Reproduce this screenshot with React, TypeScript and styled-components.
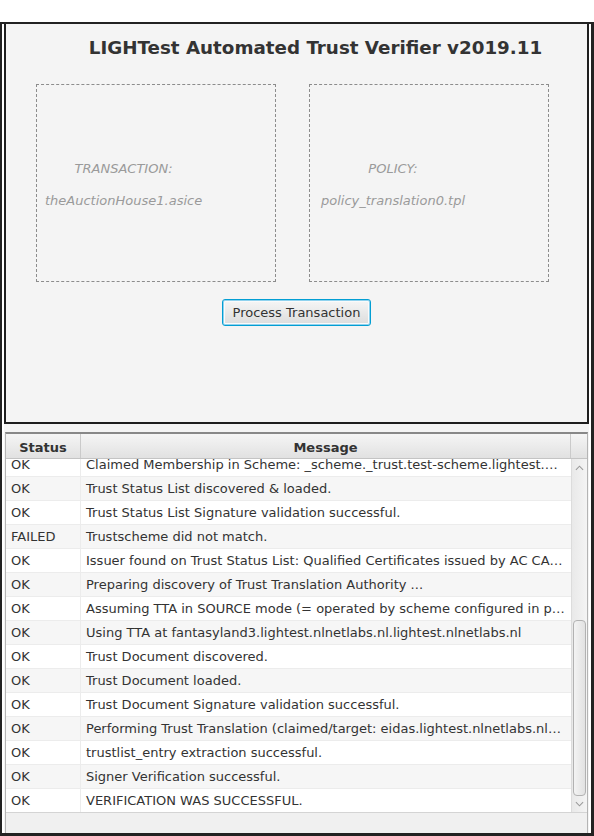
import * as React from "react";
import styled, { createGlobalStyle } from "styled-components";

interface LogEntry {
  status: string;
  message: string;
}

const LOG: LogEntry[] = [
  { status: "OK", message: "Claimed Membership in Scheme: _scheme._trust.test-scheme.lightest.nlnetlabs.nl" },
  { status: "OK", message: "Trust Status List discovered & loaded." },
  { status: "OK", message: "Trust Status List Signature validation successful." },
  { status: "FAILED", message: "Trustscheme did not match." },
  { status: "OK", message: "Issuer found on Trust Status List: Qualified Certificates issued by AC CAMERFIRMA" },
  { status: "OK", message: "Preparing discovery of Trust Translation Authority ..." },
  { status: "OK", message: "Assuming TTA in SOURCE mode (= operated by scheme configured in policy)" },
  { status: "OK", message: "Using TTA at fantasyland3.lightest.nlnetlabs.nl.lightest.nlnetlabs.nl" },
  { status: "OK", message: "Trust Document discovered." },
  { status: "OK", message: "Trust Document loaded." },
  { status: "OK", message: "Trust Document Signature validation successful." },
  { status: "OK", message: "Performing Trust Translation (claimed/target: eidas.lightest.nlnetlabs.nl/fantasyland3)" },
  { status: "OK", message: "trustlist_entry extraction successful." },
  { status: "OK", message: "Signer Verification successful." },
  { status: "OK", message: "VERIFICATION WAS SUCCESSFUL." }
];

const GlobalStyle = createGlobalStyle`
  html, body {
    margin: 0;
    padding: 0;
    background: #ffffff;
  }
  body {
    font-family: "DejaVu Sans", "Liberation Sans", sans-serif;
    font-size: 13px;
    color: #333;
  }
  * {
    box-sizing: border-box;
  }
`;

const App: React.FC = () => (
  <>
    <GlobalStyle />
    <Frame>
      <TopPanel>
        <Title>LIGHTest Automated Trust Verifier v2019.11</Title>
        <DropRow>
          <DropBox>
            <DropLabels offset={8}>
              <DropCaption>TRANSACTION:</DropCaption>
              <DropFile>theAuctionHouse1.asice</DropFile>
            </DropLabels>
          </DropBox>
          <DropBox>
            <DropLabels offset={11}>
              <DropCaption>POLICY:</DropCaption>
              <DropFile>policy_translation0.tpl</DropFile>
            </DropLabels>
          </DropBox>
        </DropRow>
        <ButtonRow>
          <ProcessButton>Process Transaction</ProcessButton>
        </ButtonRow>
      </TopPanel>
      <LowerPanel>
        <Table>
          <HeaderRow>
            <HeaderCell width={75}>Status</HeaderCell>
            <HeaderCell>Message</HeaderCell>
            <HeaderCorner />
          </HeaderRow>
          <BodyArea>
            <Rows>
              {LOG.map((entry, i) => (
                <Row key={i} odd={i % 2 === 1}>
                  <StatusCell>{entry.status}</StatusCell>
                  <MessageCell>{entry.message}</MessageCell>
                </Row>
              ))}
            </Rows>
            <ScrollBar>
              <Arrow viewBox="0 0 10 6">
                <path d="M1 5 L5 1 L9 5" />
              </Arrow>
              <Track>
                <Thumb />
              </Track>
              <Arrow viewBox="0 0 10 6">
                <path d="M1 1 L5 5 L9 1" />
              </Arrow>
            </ScrollBar>
          </BodyArea>
          <Footer />
        </Table>
      </LowerPanel>
    </Frame>
  </>
);

const Frame = styled.div`
  margin-top: 22px;
  width: 594px;
  height: 814px;
  border-top: 2px solid #222;
  border-left: 2px solid #222;
  border-right: 3px solid #222;
  border-bottom: 3px solid #222;
  padding: 0 2px;
  background: #fff;
  display: flex;
  flex-direction: column;
`;

const TopPanel = styled.div`
  height: 400px;
  background: #f4f4f4;
  border: 2px solid #1e1e1e;
  border-top: none;
  display: flex;
  flex-direction: column;
`;

const Title = styled.div`
  font-weight: bold;
  font-size: 18.3px;
  color: #333;
  text-align: center;
  padding-left: 38px;
  margin-top: 12px;
  line-height: 24px;
`;

const DropRow = styled.div`
  display: flex;
  gap: 33px;
  padding-left: 30px;
  margin-top: 24px;
`;

const DropBox = styled.div`
  width: 240px;
  height: 198px;
  border: 1px dashed #8c8c8c;
  display: flex;
  align-items: center;
`;

const DropLabels = styled.div<{ offset: number }>`
  display: flex;
  flex-direction: column;
  align-items: center;
  gap: 14px;
  margin-left: ${(p) => p.offset}px;
  margin-top: 3px;
  font-style: italic;
  color: #9a9a9a;
`;

const DropCaption = styled.span`
  line-height: 18px;
`;

const DropFile = styled.span`
  line-height: 18px;
`;

const ButtonRow = styled.div`
  display: flex;
  justify-content: center;
  margin-top: 17px;
`;

const ProcessButton = styled.button`
  font-family: "DejaVu Sans", "Liberation Sans", sans-serif;
  font-size: 13px;
  color: #333;
  width: 149px;
  height: 27px;
  padding: 0;
  border: 1px solid #039ed3;
  border-radius: 3px;
  box-shadow: inset 0 0 0 1px #8fd2ee, inset 0 0 0 2px #fafafa;
  background: linear-gradient(#f6f6f6, #dcdcdc);
`;

const LowerPanel = styled.div`
  flex: 1;
  background: #f4f4f4;
  padding-top: 8px;
  display: flex;
  flex-direction: column;
`;

const Table = styled.div`
  flex: 1;
  margin: 0 1px;
  border-top: 2px solid #888;
  border-left: 1px solid #b4b4b4;
  border-right: 1px solid #b4b4b4;
  display: flex;
  flex-direction: column;
  background: #fff;
`;

const HeaderRow = styled.div`
  height: 25px;
  display: flex;
  background: linear-gradient(#f5f5f5, #e1e1e1);
  border-bottom: 1px solid #c4c4c4;
`;

const HeaderCell = styled.div<{ width?: number }>`
  ${(p) => (p.width ? `width: ${p.width}px;` : "flex: 1;")}
  display: flex;
  align-items: center;
  justify-content: center;
  font-weight: bold;
  color: #333;
  border-right: 1px solid #cacaca;
  padding-top: 2px;
`;

const HeaderCorner = styled.div`
  width: 16px;
`;

const BodyArea = styled.div`
  height: 353px;
  display: flex;
  overflow: hidden;
`;

const Rows = styled.div`
  flex: 1;
  min-width: 0;
  margin-top: -6px;
`;

const Row = styled.div<{ odd: boolean }>`
  height: 24px;
  display: flex;
  align-items: center;
  background: ${(p) => (p.odd ? "#f6f6f6" : "#ffffff")};
  border-bottom: 1px solid #ececec;
  color: #333;
`;

const StatusCell = styled.div`
  width: 75px;
  height: 100%;
  display: flex;
  align-items: center;
  padding-left: 5px;
  border-right: 1px solid #ececec;
`;

const MessageCell = styled.div`
  flex: 1;
  min-width: 0;
  padding: 0 6px 0 5px;
  white-space: nowrap;
  overflow: hidden;
  text-overflow: ellipsis;
`;

const ScrollBar = styled.div`
  width: 16px;
  display: flex;
  flex-direction: column;
  align-items: center;
  background: linear-gradient(90deg, #e9e9e9, #f4f4f4);
  border-left: 1px solid #dcdcdc;
  padding: 6px 0 5px;
`;

const Arrow = styled.svg`
  width: 9px;
  height: 6px;
  fill: none;
  stroke: #9a9a9a;
  stroke-width: 1.2;
  flex: none;
`;

const Track = styled.div`
  flex: 1;
  width: 100%;
  padding: 0 1px;
  display: flex;
  flex-direction: column;
  justify-content: flex-end;
  padding-bottom: 5px;
`;

const Thumb = styled.div`
  height: 176px;
  border: 1px solid #b2b2b2;
  border-radius: 4px;
  background: linear-gradient(90deg, #f3f3f3, #e2e2e2);
`;

const Footer = styled.div`
  flex: 1;
  background: #f0f0f0;
  border-top: 1px solid #d4d4d4;
`;

export default App;
